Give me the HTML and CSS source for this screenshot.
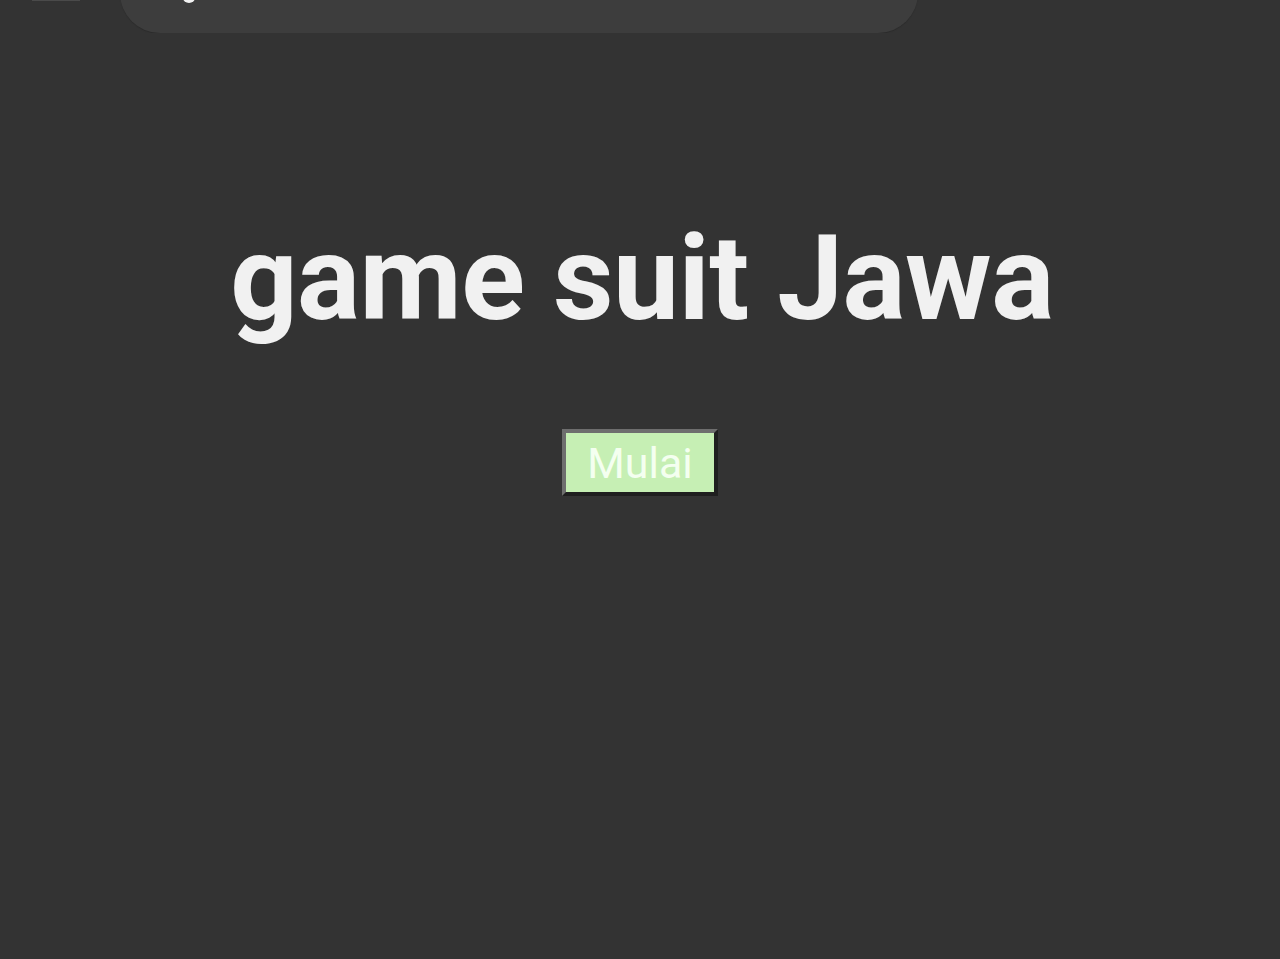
FILE: index.html
```html
<!DOCTYPE html>
<html lang="id">
<head>
<meta charset="utf-8">
<title>game suit Jawa</title>
<link rel="stylesheet" href="styles.css">
</head>
<body>
<div class="chrome">
  <span class="chrome-tab"></span>
  <div class="chrome-bar"><span class="chrome-dot"></span></div>
</div>
<main class="page">
  <h1 class="title">game suit Jawa</h1>
  <button class="start" type="button">Mulai</button>
</main>
</body>
</html>
```

FILE: styles.css
```css
html, body {
  margin: 0;
  padding: 0;
}
body {
  background: #333333;
  font-family: Roboto, "Noto Sans", sans-serif;
  height: 959px;
  overflow: hidden;
}
.chrome {
  height: 33px;
  overflow: hidden;
  display: flex;
  align-items: flex-end;
}
.chrome-tab {
  align-self: flex-start;
  margin-left: 32px;
  width: 48px;
  height: 1px;
  background: #4a4a4a;
}
.chrome-bar {
  margin-left: 40px;
  width: 798px;
  height: 80px;
  flex: none;
  border-radius: 40px;
  background: #3d3d3d;
  box-shadow: 0 1px 1px rgba(0,0,0,0.15);
  display: flex;
  align-items: flex-end;
}
.chrome-dot {
  margin-left: 63px;
  margin-bottom: 30px;
  width: 12px;
  height: 10px;
  border-radius: 50%;
  background: #f2f2f2;
}
.page {
  display: flex;
  flex-direction: column;
  align-items: center;
}
.title {
  margin: 177px 0 0 4px;
  font-size: 118px;
  line-height: 1.172;
  font-weight: 700;
  color: #f1f1f1;
  letter-spacing: -0.6px;
}
.start {
  margin-top: 81px;
  font-family: Roboto, "Noto Sans", sans-serif;
  font-size: 43px;
  line-height: 47px;
  color: #f4fff0;
  background: #c6efb4;
  padding: 7px 21px 5px;
  border-width: 4px;
  border-style: solid;
  border-color: #6e6e6e #1f1f1f #1f1f1f #6e6e6e;
  border-radius: 0;
}
```
